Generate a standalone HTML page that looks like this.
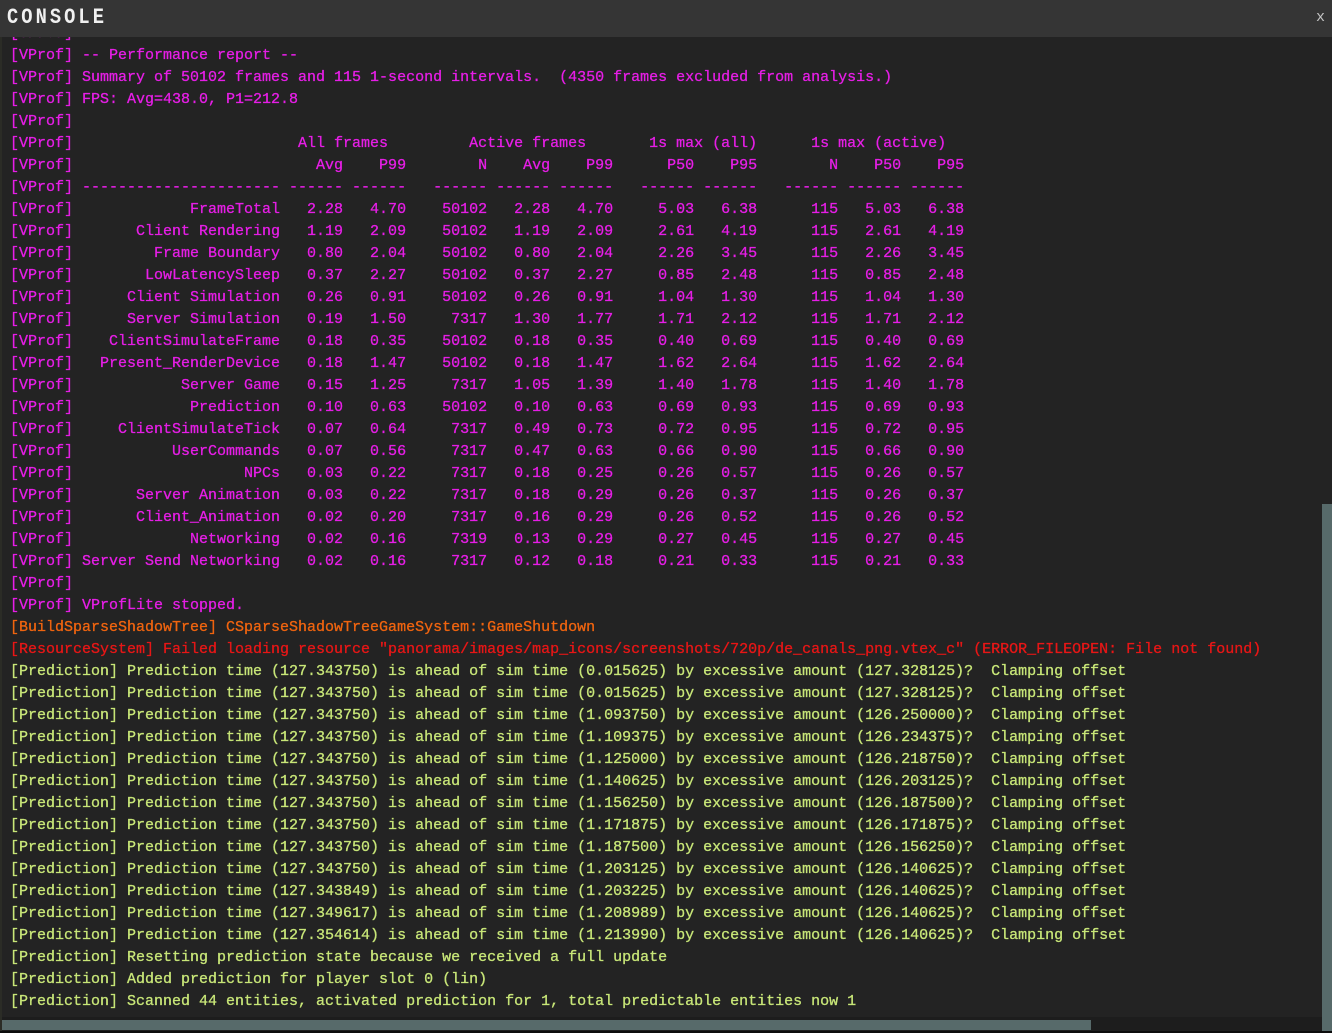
<!DOCTYPE html>
<html lang="en">
<head>
<meta charset="utf-8">
<title>Console</title>
<style>
html,body{margin:0;padding:0;background:#000;}
#win{position:relative;width:1332px;height:1033px;overflow:hidden;background:#232323;}
#edge{position:absolute;left:0;top:0;width:2px;height:1031px;background:#2b2c26;}
#log{position:absolute;left:10px;top:23px;margin:0;font:15px/22px "Liberation Mono",monospace;white-space:pre;color:#e61ee6;-webkit-text-stroke:0.3px currentColor;}
.y{color:#c8e678;}
.o{color:#f0640f;}
.r{color:#e81616;}
#head{position:absolute;left:0;top:0;width:1332px;height:37px;background:#353535;}
#title{position:absolute;left:7px;top:5px;font:bold 22px/26px "Liberation Mono",monospace;letter-spacing:3.6px;color:#f0f0f0;transform:scaleX(.85);transform-origin:0 0;}
#x{position:absolute;left:1316px;top:9px;font:15px/18px "Liberation Mono",monospace;color:#c4c4c4;}
#htrack{position:absolute;left:2px;top:1017px;width:1320px;height:14px;background:#1d1d1d;}
#hbar{position:absolute;left:2px;top:1020px;width:1089px;height:10px;background:#576a6a;}
#vbar{position:absolute;left:1322px;top:504px;width:10px;height:527px;background:#576a6a;}
#bottom{position:absolute;left:0;top:1031px;width:1332px;height:2px;background:#0c0c0c;}
</style>
</head>
<body>
<div id="win">
<div id="edge"></div>
<pre id="log">[VProf]
[VProf] -- Performance report --
[VProf] Summary of 50102 frames and 115 1-second intervals.  (4350 frames excluded from analysis.)
[VProf] FPS: Avg=438.0, P1=212.8
[VProf]
[VProf]                         All frames         Active frames       1s max (all)      1s max (active)
[VProf]                           Avg    P99        N    Avg    P99      P50    P95        N    P50    P95
[VProf] ---------------------- ------ ------   ------ ------ ------   ------ ------   ------ ------ ------
[VProf]             FrameTotal   2.28   4.70    50102   2.28   4.70     5.03   6.38      115   5.03   6.38
[VProf]       Client Rendering   1.19   2.09    50102   1.19   2.09     2.61   4.19      115   2.61   4.19
[VProf]         Frame Boundary   0.80   2.04    50102   0.80   2.04     2.26   3.45      115   2.26   3.45
[VProf]        LowLatencySleep   0.37   2.27    50102   0.37   2.27     0.85   2.48      115   0.85   2.48
[VProf]      Client Simulation   0.26   0.91    50102   0.26   0.91     1.04   1.30      115   1.04   1.30
[VProf]      Server Simulation   0.19   1.50     7317   1.30   1.77     1.71   2.12      115   1.71   2.12
[VProf]    ClientSimulateFrame   0.18   0.35    50102   0.18   0.35     0.40   0.69      115   0.40   0.69
[VProf]   Present_RenderDevice   0.18   1.47    50102   0.18   1.47     1.62   2.64      115   1.62   2.64
[VProf]            Server Game   0.15   1.25     7317   1.05   1.39     1.40   1.78      115   1.40   1.78
[VProf]             Prediction   0.10   0.63    50102   0.10   0.63     0.69   0.93      115   0.69   0.93
[VProf]     ClientSimulateTick   0.07   0.64     7317   0.49   0.73     0.72   0.95      115   0.72   0.95
[VProf]           UserCommands   0.07   0.56     7317   0.47   0.63     0.66   0.90      115   0.66   0.90
[VProf]                   NPCs   0.03   0.22     7317   0.18   0.25     0.26   0.57      115   0.26   0.57
[VProf]       Server Animation   0.03   0.22     7317   0.18   0.29     0.26   0.37      115   0.26   0.37
[VProf]       Client_Animation   0.02   0.20     7317   0.16   0.29     0.26   0.52      115   0.26   0.52
[VProf]             Networking   0.02   0.16     7319   0.13   0.29     0.27   0.45      115   0.27   0.45
[VProf] Server Send Networking   0.02   0.16     7317   0.12   0.18     0.21   0.33      115   0.21   0.33
[VProf]
[VProf] VProfLite stopped.
<span class="o">[BuildSparseShadowTree] CSparseShadowTreeGameSystem::GameShutdown</span>
<span class="r">[ResourceSystem] Failed loading resource "panorama/images/map_icons/screenshots/720p/de_canals_png.vtex_c" (ERROR_FILEOPEN: File not found)</span>
<span class="y">[Prediction] Prediction time (127.343750) is ahead of sim time (0.015625) by excessive amount (127.328125)?  Clamping offset
[Prediction] Prediction time (127.343750) is ahead of sim time (0.015625) by excessive amount (127.328125)?  Clamping offset
[Prediction] Prediction time (127.343750) is ahead of sim time (1.093750) by excessive amount (126.250000)?  Clamping offset
[Prediction] Prediction time (127.343750) is ahead of sim time (1.109375) by excessive amount (126.234375)?  Clamping offset
[Prediction] Prediction time (127.343750) is ahead of sim time (1.125000) by excessive amount (126.218750)?  Clamping offset
[Prediction] Prediction time (127.343750) is ahead of sim time (1.140625) by excessive amount (126.203125)?  Clamping offset
[Prediction] Prediction time (127.343750) is ahead of sim time (1.156250) by excessive amount (126.187500)?  Clamping offset
[Prediction] Prediction time (127.343750) is ahead of sim time (1.171875) by excessive amount (126.171875)?  Clamping offset
[Prediction] Prediction time (127.343750) is ahead of sim time (1.187500) by excessive amount (126.156250)?  Clamping offset
[Prediction] Prediction time (127.343750) is ahead of sim time (1.203125) by excessive amount (126.140625)?  Clamping offset
[Prediction] Prediction time (127.343849) is ahead of sim time (1.203225) by excessive amount (126.140625)?  Clamping offset
[Prediction] Prediction time (127.349617) is ahead of sim time (1.208989) by excessive amount (126.140625)?  Clamping offset
[Prediction] Prediction time (127.354614) is ahead of sim time (1.213990) by excessive amount (126.140625)?  Clamping offset
[Prediction] Resetting prediction state because we received a full update
[Prediction] Added prediction for player slot 0 (lin)
[Prediction] Scanned 44 entities, activated prediction for 1, total predictable entities now 1</span></pre>
<div id="head">
<div id="title">CONSOLE</div>
<div id="x">x</div>
</div>
<div id="htrack"></div>
<div id="hbar"></div>
<div id="vbar"></div>
<div id="bottom"></div>
</div>
</body>
</html>
